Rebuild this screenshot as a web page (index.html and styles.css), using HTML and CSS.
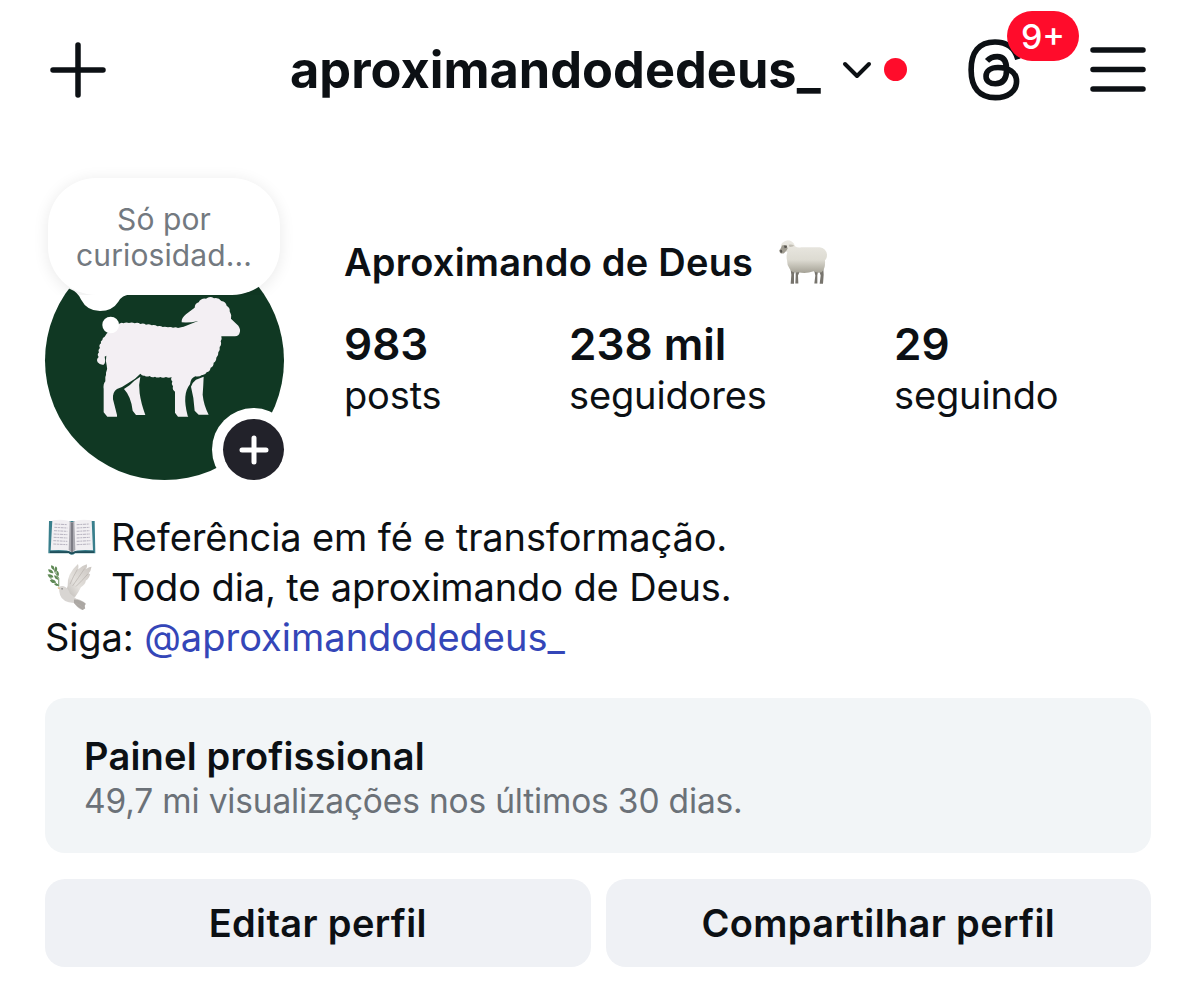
FILE: index.html
```html
<!DOCTYPE html>
<html lang="pt-BR">
<head>
  <meta charset="UTF-8" />
  <meta name="viewport" content="width=device-width, initial-scale=1.0" />
  <title>aproximandodedeus_</title>
  <link rel="stylesheet" href="styles.css">
</head>
<body>
  <header class="topbar">
    <svg class="icon-add" viewBox="0 0 56 56"><path d="M28 3v50M3 28h50" /></svg>
    <div class="account">
      <h1>aproximandodedeus_</h1>
      <svg class="icon-chevron" viewBox="0 0 30 18"><path d="M3 3l12 12L27 3" /></svg>
      <span class="dot"></span>
    </div>
    <div class="threads">
      <svg class="icon-threads" viewBox="86 115 156 187">
        <path d="M236 176C226 139 201 124 167 124C118 124 95 155 95 208C95 262 120 292 168 292C206 292 232 272 232 243C232 215 208 201 176 201C153 201 140 212 140 227C140 242 152 250 168 250C190 250 202 236 202 208C202 182 194 168 174 168C160 168 151 172 143 181" />
      </svg>
      <span class="badge">9+</span>
    </div>
    <svg class="icon-menu" viewBox="0 0 56 46"><path d="M3 3h50M3 22.5h50M3 42h50" /></svg>
  </header>

  <section class="profile">
    <div class="avatar">
      <svg class="avatar-photo" viewBox="0 0 239 239">
        <circle cx="119.5" cy="119.5" r="119.5" fill="#103823" />
        <g transform="translate(35 39) scale(.3333)" fill="#f3eff3">
          <path d="M112 137q10-12 18-7q9-5 17-1q9-4 17 1q9-4 17 2q9-4 17 2q9-3 17 2q9-3 17 3q9-3 16 2q9-2 16 1q9-2 15 1q9-3 15 1q10-3 17-4L354 123Q330 129 305 127Q303 115 318 103Q330 93 344 83Q345 70 356 67Q363 54 378 56Q390 46 402 55Q416 52 424 63Q438 65 440 77Q451 84 449 94Q456 105 453 116L475 137Q483 149 479 158Q477 168 465 169L424 169Q427 178 422 184Q426 194 419 201Q421 211 415 217Q416 228 409 233Q409 244 401 248Q401 260 392 263Q390 275 380 277Q376 286 366 285Q358 291 346 289Q332 294 330 313Q318 328 316 350Q314 373 323 407L325 410H294L285 398V335Q276 330 279 319Q273 312 277 304Q271 299 275 291Q267 296 258 291Q249 296 241 291Q232 295 225 290Q216 294 209 288Q200 292 194 287Q187 289 181 281L165 296L145 309L126 321L111 327Q97 336 99 358L111 405V410H82L71 397V327Q69 312 76 304V291Q79 285 78 278Q84 268 80 256Q76 242 79 227L74 230Q78 248 71 254Q60 256 53 247Q48 238 56 231Q50 224 57 217Q53 210 60 204Q55 196 63 190Q60 184 67 180Q67 173 74 170Q80 158 87 156Z" />
          <path d="M181 290Q175 314 179 340Q183 370 196 405H168L158 392Q153 349 132 327Q151 316 163 302Z" />
          <path d="M371 290Q370 318 368 344Q371 375 386 404H356L344 392Q342 353 333 320Q338 306 348 299Z" />
          <circle cx="92" cy="135" r="25" fill="#fff" />
        </g>
        <path d="M24 47.5Q33 51 36 58.5Q42 70 55 70Q67.500 70 73.500 60.500Q77 54 85 53.500V39H24Z" fill="#fff" />
      </svg>
      <div class="note"><span>Só por<br>curiosidad...</span></div>
      <span class="add-story"><svg viewBox="0 0 28 28"><path d="M14 2v24M2 14h24" /></svg></span>
    </div>

    <div class="info">
      <h2>Aproximando de Deus
        <svg class="sheep" viewBox="50 45 150 140">
          <defs>
            <linearGradient id="wool" x1="0" y1="0" x2="0" y2="1">
              <stop offset="0" stop-color="#eceae4" />
              <stop offset=".6" stop-color="#dddbd2" />
              <stop offset="1" stop-color="#a5a296" />
            </linearGradient>
          </defs>
          <path d="M88 137h13l-3 14v28H88l2-27zM103 140h13l-6 14 1 24h-9l1-22zM158 137h13l-3 16v25h-9l3-24zM171 132h15l1 20-2 27H175l3-25z" fill="#77746d" />
          <path d="M63 56Q77 43 91 52Q98 55 101 66Q110 72 120 69H175Q194 71 197 91Q197 104 191 108Q193 133 181 144Q168 148 157 141Q133 150 111 144Q91 148 85 134Q77 124 77 108Q74 96 78 84L62 73Q56 65 63 56Z" fill="url(#wool)" />
          <path d="M62 64Q69 60 76 65L79 73Q75 82 67 88L59 88Q53 84 54 78Q59 74 62 64Z" fill="#a09c91" />
          <path d="M55 79l6-2 2 6-4 4zM68 65l8-1 1 6-7 2z" fill="#56544e" />
          <path d="M82 62Q90 59 99 65Q94 69 84 68Z" fill="#c4c0b6" />
        </svg>
      </h2>
      <ul class="stats">
        <li><b>983</b><span>posts</span></li>
        <li><b>238 mil</b><span>seguidores</span></li>
        <li><b>29</b><span>seguindo</span></li>
      </ul>
    </div>
  </section>

  <section class="bio">
    <p>
      <svg class="book" viewBox="40 42 144 108">
        <path d="M43 48h137l2 97h-61q-9 9-19 0H41z" fill="#397f8c" />
        <path d="M46 139h132v5h-57q-10 7-19 0H46z" fill="#1f4e59" />
        <path d="M53 46Q93 41 112 52Q131 41 171 46L175 136Q130 132 112 142Q94 132 48 136Z" fill="#f1eff2" />
        <path d="M105 49l7 4 7-4 3 86-10 7-10-7z" fill="#aaa9b0" />
        <path d="M112 52v89" stroke="#66666f" stroke-width="4" />
        <path d="M60 57l38 2M59 67l39 2M58 77l40 2M57 87l41 2M57 97l41 2M56 107l42 2M56 117l42 2M126 59l38-2M126 69l39-2M126 79l39-2M126 89l40-2M126 99l40-2M126 109l41-2M126 119l41-2" stroke="#b7b3c0" stroke-width="3" stroke-dasharray="9 2 6 2" />
      </svg>
      <span>Referência em fé e transformação.</span>
    </p>
    <p>
      <svg class="dove" viewBox="38 173 138 145">
        <defs>
          <linearGradient id="wing" x1="1" y1="0" x2="0" y2="1">
            <stop offset="0" stop-color="#c9c4bf" />
            <stop offset=".6" stop-color="#e4e1dd" />
            <stop offset="1" stop-color="#bcb8b4" />
          </linearGradient>
        </defs>
        <path d="M100 242Q97 207 131 176Q134 182 132 192Q145 180 158 177Q160 185 155 191Q166 184 172 184Q170 198 163 205L168 207Q163 222 155 226Q153 239 140 246Q133 261 123 275Q108 279 93 264Z" fill="url(#wing)" />
        <path d="M75 245Q84 240 94 246Q103 251 107 265L126 281Q145 285 155 296Q149 300 153 310L145 315Q131 312 119 294Q84 292 77 270Q73 258 75 245Z" fill="#d8d5d2" />
        <path d="M119 283Q139 282 155 297Q149 301 153 310L145 315Q132 310 119 294Z" fill="#aba7a3" />
        <path d="M107 237Q117 213 129 193M115 242Q132 218 151 190M125 244Q144 226 162 205M123 294Q139 299 149 310" stroke="#b5afaa" stroke-width="2" fill="none" />
        <path d="M75 246l-6 2 6 4z" fill="#d7a05e" />
        <circle cx="83" cy="251" r="2" fill="#444" />
        <path d="M55 183Q60 202 73 219V244M43 213Q55 227 72 241" stroke="#719268" stroke-width="3" fill="none" />
        <path d="M50 180q11 1 9 14q-11-3-9-14zM64 183q9 8 0 18q-7-9 0-18zM41 192q14 0 16 12q-15 1-16-12zM67 196q10 6 5 17q-9-5-5-17zM39 208q14-3 18 8q-13 5-18-8zM59 210q12 2 13 14q-12-2-13-14zM46 224q15-4 19 8q-14 5-19-8zM58 236q10-4 16 4q-9 6-16-4z" fill="#5f8955" />
      </svg>
      <span>Todo dia, te aproximando de Deus.</span>
    </p>
    <p>Siga:&nbsp;<a class="mention">@aproximandodedeus_</a></p>
  </section>

  <section class="panel">
    <h3>Painel profissional</h3>
    <p>49,7 mi visualizações nos últimos 30 dias.</p>
  </section>

  <div class="actions">
    <button type="button">Editar perfil</button>
    <button type="button">Compartilhar perfil</button>
  </div>
</body>
</html>
```
FILE: styles.css
```css
* { box-sizing: border-box; margin: 0; padding: 0; }
body { width: 1196px; height: 991px; padding: 0 45px; background: #fff; color: #0c1014; font-family: Inter, sans-serif; overflow: hidden; }
svg { display: block; flex: none; overflow: visible; }

.topbar { display: flex; align-items: center; height: 139px; padding: 0 5px; }
.topbar svg { fill: none; stroke: #0c1014; stroke-width: 5.5; stroke-linecap: round; stroke-linejoin: round; }
.icon-add { width: 56px; height: 56px; }
.account { display: flex; align-items: center; margin-left: 184px; }
.account h1 { width: 535px; font-size: 50.5px; line-height: 60px; font-weight: 700; letter-spacing: 0; white-space: nowrap; }
.topbar .icon-chevron { width: 30px; height: 18px; margin-left: 17px; stroke-width: 4; }
.dot { width: 23px; height: 23px; margin-left: 12px; border-radius: 50%; background: #ff0c2b; }
.threads { position: relative; margin-left: 61px; }
.topbar .icon-threads { width: 52px; height: 62px; stroke-width: 17; stroke-linecap: butt; }
.badge { position: absolute; left: 39px; top: -28px; width: 72px; height: 50px; border-radius: 25px; background: #ff0c2b; color: #fff; font-size: 34px; line-height: 52px; font-weight: 500; text-align: center; }
.icon-menu { width: 56px; height: 46px; margin-left: auto; }

.profile { display: flex; padding-top: 102px; }
.avatar { position: relative; width: 239px; height: 239px; }
.avatar-photo { width: 239px; height: 239px; }
.note { position: absolute; left: 3px; top: -63px; width: 232px; height: 117px; padding-top: 23px; border-radius: 48px; background: #fff; box-shadow: 0 2px 16px rgba(0, 0, 0, .09); clip-path: inset(-30px -30px 0 -30px); color: #737980; font-size: 30px; line-height: 36px; letter-spacing: .1px; text-align: center; }
.add-story { position: absolute; right: 0; bottom: 0; display: flex; align-items: center; justify-content: center; width: 61px; height: 61px; border-radius: 50%; background: #22222a; box-shadow: 0 0 0 11px #fff; }
.add-story svg { width: 28px; height: 28px; fill: none; stroke: #fff; stroke-width: 5; stroke-linecap: round; }

.info { margin-left: 60px; }
.info h2 { display: flex; align-items: center; gap: 25px; height: 42px; font-size: 38px; font-weight: 600; letter-spacing: .22px; white-space: nowrap; }
.sheep { width: 50px; height: 47px; }
.stats { display: flex; margin-top: 34px; list-style: none; }
.stats li:nth-child(1) { width: 225px; }
.stats li:nth-child(2) { width: 325px; }
.stats b { display: block; font-size: 44px; line-height: 54px; font-weight: 600; }
.stats span { display: block; font-size: 38px; line-height: 48px; letter-spacing: -.15px; }

.bio { margin-top: 32px; font-size: 38px; line-height: 50px; letter-spacing: -.12px; }
.bio p { display: flex; align-items: center; height: 50px; white-space: nowrap; }
.book { width: 48px; height: 36px; margin: 0 15px 0 3px; }
.dove { width: 46px; height: 48px; margin: 0 18px 0 2px; }
.mention { color: #3446b8; letter-spacing: 0; }

.panel { height: 155px; margin-top: 36px; padding: 35px 39px; border-radius: 20px; background: #f2f5f7; }
.panel h3 { font-size: 38px; line-height: 46px; font-weight: 600; letter-spacing: .2px; }
.panel p { color: #6b7178; font-size: 33.5px; line-height: 44px; letter-spacing: -.17px; }

.actions { display: grid; grid-template-columns: 1fr 1fr; gap: 15px; margin-top: 26px; }
.actions button { height: 88px; border: 0; border-radius: 20px; background: #eff1f5; color: #0c1014; font: 600 38px Inter, sans-serif; letter-spacing: .35px; }
```
